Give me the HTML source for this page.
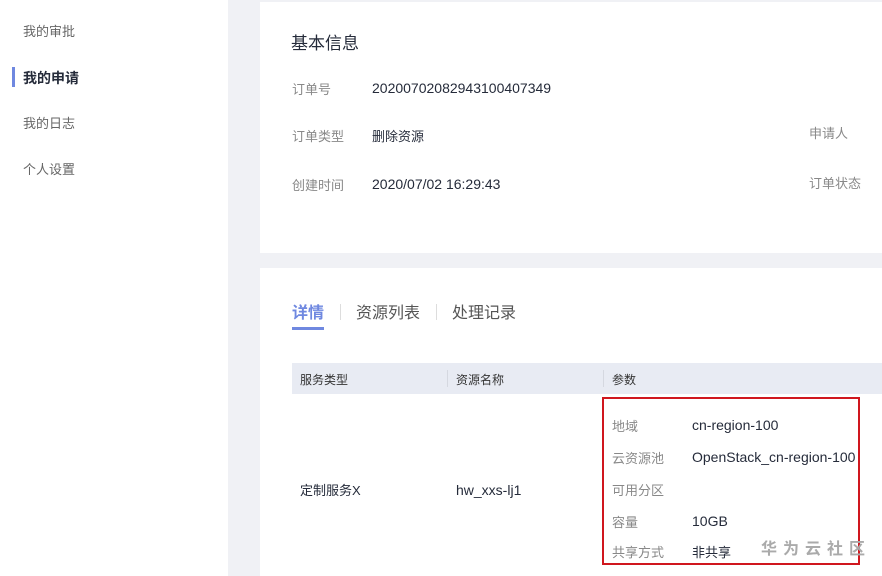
<!DOCTYPE html>
<html><head><meta charset="utf-8"><style>
*{margin:0;padding:0;box-sizing:border-box}
body{width:882px;height:576px;overflow:hidden;background:#f0f1f5;font-family:"Liberation Sans","Noto Sans CJK SC",sans-serif;position:relative;font-size:13px}
.side{position:absolute;left:0;top:0;width:228px;height:576px;background:#fff}
.side div{position:absolute;left:23px;color:#666;font-size:13px;line-height:20px}
.card{position:absolute;left:260px;right:0;background:#fff}
.t{position:absolute;white-space:nowrap;line-height:20px}
.c{position:relative;top:2px}
.g{color:#888}
.d{color:#252b3a}
.l{font-size:14px}
</style></head><body>
<div class="side">
<div style="top:22px">我的审批</div>
<div style="top:68px;color:#252b3a;font-weight:bold;font-size:14px">我的申请</div>
<div style="position:absolute;left:12px;top:67px;width:3px;height:20px;background:#6f88e0"></div>
<div style="top:114px">我的日志</div>
<div style="top:160px">个人设置</div>
</div>
<div class="card" style="top:2px;height:251px">
<div class="t d" style="left:31px;top:30px;font-size:17px;line-height:24px">基本信息</div>
<div class="t g" style="left:32px;top:78px">订单号</div>
<div class="t d l" style="left:112px;top:76px">20200702082943100407349</div>
<div class="t g" style="left:32px;top:125px">订单类型</div>
<div class="t d" style="left:112px;top:125px">删除资源</div>
<div class="t g" style="left:549px;top:122px">申请人</div>
<div class="t g" style="left:32px;top:174px">创建时间</div>
<div class="t d l" style="left:112px;top:172px">2020/07/02 16:29:43</div>
<div class="t g" style="left:549px;top:172px">订单状态</div>
</div>
<div class="card" style="top:268px;height:308px">
<div class="t" style="left:32px;top:34px;font-size:16px;line-height:24px;color:#6f88e0;font-weight:bold">详情</div>
<div style="position:absolute;left:32px;top:59px;width:32px;height:3px;background:#6f88e0"></div>
<div style="position:absolute;left:80px;top:36px;width:1px;height:16px;background:#ddd"></div>
<div class="t" style="left:96px;top:34px;font-size:16px;line-height:24px;color:#555">资源列表</div>
<div style="position:absolute;left:176px;top:36px;width:1px;height:16px;background:#ddd"></div>
<div class="t" style="left:192px;top:34px;font-size:16px;line-height:24px;color:#555">处理记录</div>
<div style="position:absolute;left:32px;top:95px;right:0;height:31px;background:#e8ebf3"></div>
<div class="t" style="left:40px;top:102px;font-size:12px;color:#333">服务类型</div>
<div style="position:absolute;left:187px;top:102px;width:1px;height:17px;background:#d5d8e0"></div>
<div class="t" style="left:196px;top:102px;font-size:12px;color:#333">资源名称</div>
<div style="position:absolute;left:343px;top:102px;width:1px;height:17px;background:#d5d8e0"></div>
<div class="t" style="left:352px;top:102px;font-size:12px;color:#333">参数</div>
<div class="t d" style="left:40px;top:213px">定制服务X</div>
<div class="t d l" style="left:196px;top:212px">hw_xxs-lj1</div>
<div style="position:absolute;left:342px;top:129px;width:258px;height:168px;border:2px solid #d0171e"></div>
<div class="t g" style="left:352px;top:149px">地域</div><div class="t d l" style="left:432px;top:147px">cn-region-100</div>
<div class="t g" style="left:352px;top:181px">云资源池</div><div class="t d l" style="left:432px;top:179px">OpenStack_cn-region-100</div>
<div class="t g" style="left:352px;top:213px">可用分区</div>
<div class="t g" style="left:352px;top:245px">容量</div><div class="t d l" style="left:432px;top:243px">10GB</div>
<div class="t g" style="left:352px;top:275px">共享方式</div><div class="t d" style="left:432px;top:275px">非共享</div>
<div class="t" style="left:501px;top:272px;font-size:16px;color:#aaa;letter-spacing:6px;font-weight:bold">华为云社区</div>
</div>
</body></html>
